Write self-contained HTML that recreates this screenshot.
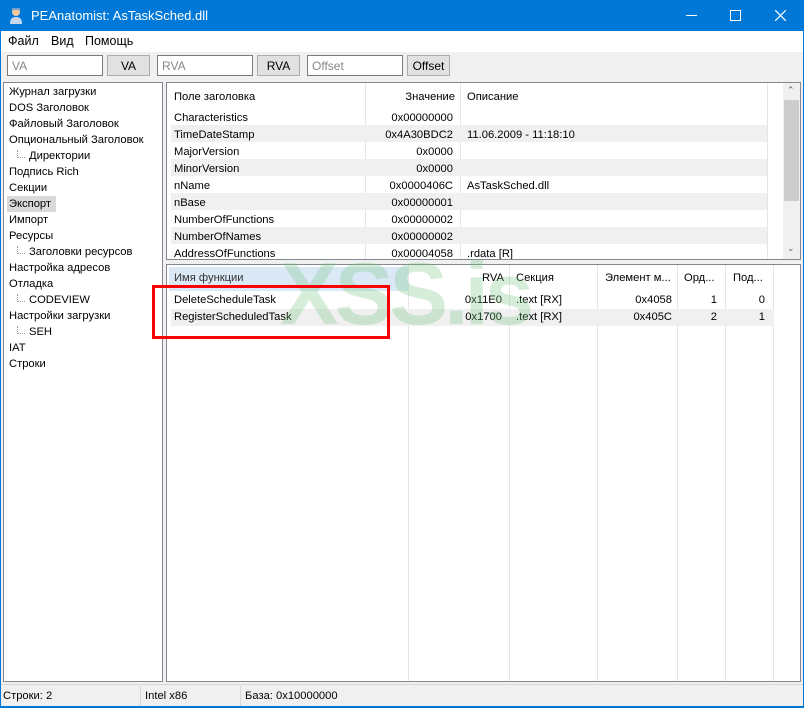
<!DOCTYPE html>
<html><head><meta charset="utf-8"><style>
*{margin:0;padding:0;box-sizing:border-box}
body{width:804px;height:708px;background:#f0f0f0;font-family:"Liberation Sans","DejaVu Sans",sans-serif;font-size:11.2px;color:#000;position:relative;overflow:hidden}
.a{position:absolute;white-space:nowrap}
.title{left:0;top:0;width:804px;height:31px;background:#0078d7;color:#fff;font-size:13px}
.menu{top:31px;left:0;width:804px;height:21px;background:#fff;font-size:12.5px}
.inp{height:21px;border:1px solid #7a7a7a;background:#fff;color:#888;padding:3px 4px;font-size:12px}
.btn{height:21px;border:1px solid #adadad;background:#e1e1e1;text-align:center;padding-top:3px;font-size:12px}
.panel{background:#fff;border:1px solid #828790}
.tr{left:9px}
.r{text-align:right}
.alt{background:#f0f0f0}
.dot{border-left:1px dotted #999;border-bottom:1px dotted #999}
</style></head><body>
<div class="a title">
  <svg class="a" style="left:8px;top:7px" width="16" height="18" viewBox="0 0 16 18"><circle cx="8" cy="5" r="4" fill="#f1c8a0"/><path d="M4 3h8v-2h-8z" fill="#7aa0c8"/><path d="M2 17c0-5 2-7 6-7s6 2 6 7z" fill="#c8d8ea"/></svg>
  <span class="a" style="left:31px;top:8px">PEAnatomist: AsTaskSched.dll</span>
  <div class="a" style="left:686px;top:15px;width:11px;height:1px;background:#fff"></div>
  <div class="a" style="left:730px;top:10px;width:11px;height:11px;border:1px solid #fff"></div>
  <svg class="a" style="left:775px;top:10px" width="11" height="11"><path d="M0 0L11 11M11 0L0 11" stroke="#fff" stroke-width="1.2"/></svg>
</div>
<div class="a menu"><span class="a" style="left:8px;top:3px">Файл</span><span class="a" style="left:51px;top:3px">Вид</span><span class="a" style="left:85px;top:3px">Помощь</span></div>
<div class="a inp" style="left:7px;top:55px;width:96px">VA</div>
<div class="a btn" style="left:107px;top:55px;width:43px">VA</div>
<div class="a inp" style="left:157px;top:55px;width:96px">RVA</div>
<div class="a btn" style="left:257px;top:55px;width:43px">RVA</div>
<div class="a inp" style="left:307px;top:55px;width:96px">Offset</div>
<div class="a btn" style="left:407px;top:55px;width:43px">Offset</div>

<div class="a panel" style="left:3px;top:82px;width:160px;height:600px"></div>
<div class="a tr" style="top:86px">Журнал загрузки</div>
<div class="a tr" style="top:102px">DOS Заголовок</div>
<div class="a tr" style="top:118px">Файловый Заголовок</div>
<div class="a tr" style="top:134px">Опциональный Заголовок</div>
<div class="a dot" style="left:17px;top:150px;width:8px;height:8px"></div><div class="a" style="left:29px;top:150px">Директории</div>
<div class="a tr" style="top:166px">Подпись Rich</div>
<div class="a tr" style="top:182px">Секции</div>
<div class="a" style="left:7px;top:196px;width:49px;height:16px;background:#d9d9d9"></div><div class="a tr" style="top:198px">Экспорт</div>
<div class="a tr" style="top:214px">Импорт</div>
<div class="a tr" style="top:230px">Ресурсы</div>
<div class="a dot" style="left:17px;top:246px;width:8px;height:8px"></div><div class="a" style="left:29px;top:246px">Заголовки ресурсов</div>
<div class="a tr" style="top:262px">Настройка адресов</div>
<div class="a tr" style="top:278px">Отладка</div>
<div class="a dot" style="left:17px;top:294px;width:8px;height:8px"></div><div class="a" style="left:29px;top:294px">CODEVIEW</div>
<div class="a tr" style="top:310px">Настройки загрузки</div>
<div class="a dot" style="left:17px;top:326px;width:8px;height:8px"></div><div class="a" style="left:29px;top:326px">SEH</div>
<div class="a tr" style="top:342px">IAT</div>
<div class="a tr" style="top:358px">Строки</div>

<div class="a panel" style="left:166px;top:82px;width:635px;height:178px;overflow:hidden">
  <div class="a" style="left:198px;top:0;width:1px;height:176px;background:#e5e5e5"></div>
  <div class="a" style="left:293px;top:0;width:1px;height:176px;background:#e5e5e5"></div>
  <div class="a" style="left:600px;top:0;width:1px;height:176px;background:#e5e5e5"></div>
  <div class="a" style="left:7px;top:8px">Поле заголовка</div><div class="a r" style="left:200px;width:88px;top:8px">Значение</div><div class="a" style="left:300px;top:8px">Описание</div>
  <div class="a alt" style="left:4px;top:42px;width:596px;height:17px"></div>
  <div class="a alt" style="left:4px;top:76px;width:596px;height:17px"></div>
  <div class="a alt" style="left:4px;top:110px;width:596px;height:17px"></div>
  <div class="a alt" style="left:4px;top:144px;width:596px;height:17px"></div>
  <div class="a" style="left:7px;top:27px;line-height:17px">Characteristics<br>TimeDateStamp<br>MajorVersion<br>MinorVersion<br>nName<br>nBase<br>NumberOfFunctions<br>NumberOfNames<br>AddressOfFunctions</div>
  <div class="a r" style="left:200px;width:86px;top:27px;line-height:17px">0x00000000<br>0x4A30BDC2<br>0x0000<br>0x0000<br>0x0000406C<br>0x00000001<br>0x00000002<br>0x00000002<br>0x00004058</div>
  <div class="a" style="left:300px;top:27px;line-height:17px"><br>11.06.2009 - 11:18:10<br><br><br>AsTaskSched.dll<br><br><br><br>.rdata [R]</div>
  <div class="a" style="left:616px;top:0;width:17px;height:176px;background:#f0f0f0"></div>
  <div class="a" style="left:617px;top:17px;width:15px;height:101px;background:#cdcdcd"></div>
  <div class="a" style="left:620px;top:2px;font-size:9px;color:#606060">⌃</div>
  <div class="a" style="left:620px;top:160px;font-size:9px;color:#606060">⌄</div>
</div>

<div class="a panel" style="left:166px;top:264px;width:635px;height:418px;overflow:hidden">
  <div class="a" style="left:2px;top:2px;width:240px;height:24px;background:#dbe8f6"></div>
  <div class="a" style="left:241px;top:0;width:1px;height:418px;background:#e5e5e5"></div>
  <div class="a" style="left:342px;top:0;width:1px;height:418px;background:#e5e5e5"></div>
  <div class="a" style="left:430px;top:0;width:1px;height:418px;background:#e5e5e5"></div>
  <div class="a" style="left:510px;top:0;width:1px;height:418px;background:#e5e5e5"></div>
  <div class="a" style="left:558px;top:0;width:1px;height:418px;background:#e5e5e5"></div>
  <div class="a" style="left:606px;top:0;width:1px;height:418px;background:#e5e5e5"></div>
  <div class="a" style="left:7px;top:7px;color:#333">Имя функции</div>
  <div class="a r" style="left:244px;width:93px;top:7px">RVA</div>
  <div class="a" style="left:349px;top:7px">Секция</div>
  <div class="a" style="left:438px;top:7px">Элемент м...</div>
  <div class="a" style="left:517px;top:7px">Орд...</div>
  <div class="a" style="left:566px;top:7px">Под...</div>
  <div class="a alt" style="left:4px;top:44px;width:603px;height:17px"></div>
  <div class="a" style="left:7px;top:27px;line-height:17px">DeleteScheduleTask<br>RegisterScheduledTask</div>
  <div class="a r" style="left:244px;width:91px;top:27px;line-height:17px">0x11E0<br>0x1700</div>
  <div class="a" style="left:349px;top:27px;line-height:17px">.text [RX]<br>.text [RX]</div>
  <div class="a r" style="left:432px;width:73px;top:27px;line-height:17px">0x4058<br>0x405C</div>
  <div class="a r" style="left:512px;width:38px;top:27px;line-height:17px">1<br>2</div>
  <div class="a r" style="left:560px;width:38px;top:27px;line-height:17px">0<br>1</div>
</div>
<div class="a" style="left:280px;top:243px;font-size:88px;font-weight:bold;color:rgba(120,200,130,0.3);letter-spacing:-4px">XSS.is</div>
<div class="a" style="left:152px;top:285px;width:238px;height:54px;border:3px solid #f00"></div>

<div class="a" style="left:0;top:684px;width:804px;height:1px;background:#d7d7d7"></div>
<div class="a" style="left:3px;top:690px">Строки: 2</div>
<div class="a" style="left:140px;top:686px;width:1px;height:20px;background:#d7d7d7"></div>
<div class="a" style="left:145px;top:690px">Intel x86</div>
<div class="a" style="left:240px;top:686px;width:1px;height:20px;background:#d7d7d7"></div>
<div class="a" style="left:245px;top:690px">База: 0x10000000</div>
<div class="a" style="left:0;top:706px;width:804px;height:2px;background:#0078d7"></div>
<div class="a" style="left:0;top:31px;width:1px;height:677px;background:#0078d7"></div>
<div class="a" style="left:803px;top:31px;width:1px;height:677px;background:#0078d7"></div>
</body></html>
